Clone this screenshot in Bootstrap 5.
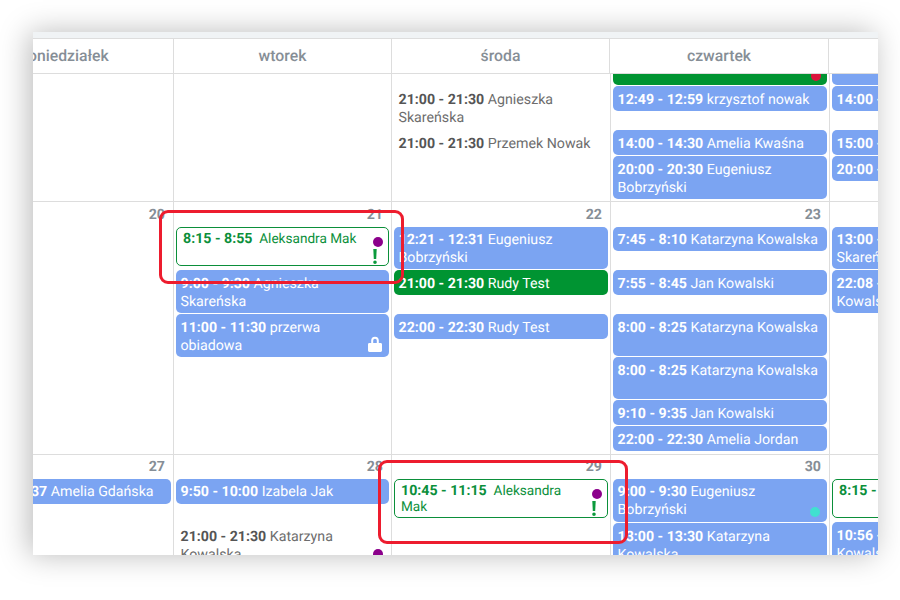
<!DOCTYPE html>
<html lang="pl">
<head>
<meta charset="utf-8">
<title>Kalendarz</title>
<link rel="stylesheet" href="https://cdn.jsdelivr.net/npm/bootstrap@5.3.0/dist/css/bootstrap.min.css">
<style>
html,body{height:100%;overflow:hidden;background:#fff}
body{font-family:Roboto,"Liberation Sans",sans-serif;font-size:14.2px;line-height:18px;color:#555;position:relative;text-rendering:geometricPrecision}
.frame{position:absolute;left:33px;top:32px;width:845px;height:523px;overflow:hidden;background:#fff;box-shadow:-4px 0 28px rgba(0,0,0,.27)}
.shell{margin-left:-78px;width:1100px}
.strip{height:6px;background:#f0f3f5;margin-left:78px}
.cal-head,.cal-row{display:grid;grid-template-columns:219px 218px 218px 219px 219px}
.cal-row{grid-template-columns:219px 218px 219px 219px 219px;border-top:1px solid #ddd}
.cal-head{border-top:1px solid #ddd;height:35px}
.hcell{border-right:1px solid #ddd;text-align:center;font-weight:500;font-size:15.75px;color:#868e96;line-height:34px}
.row-a{height:128px}
.row-b{height:253px}
.row-c{height:120px}
.dcell{border-right:1px solid #ddd;min-width:0}
.num{height:25px;padding:4px 8px 0 0;text-align:right;font-weight:700;color:#868e96;line-height:18px}
.row-c .num{height:24px;padding-top:3px}
.ev{margin:0 2px 1px;padding:5px 5px 2px 4.500px;border-radius:5px;background:#7ba4f2;color:#fff;position:relative;font-weight:400}
.num + .ev{padding-top:4px;padding-bottom:3px}
.ev b{font-weight:700}
.ev.plain{background:transparent;color:#6d6d6d}
.ev.plain b{color:#555}
.ev.full{background:#009432}
.ev.out,.num + .ev.out{background:#fff;color:#0b8f3a;border:1px solid #0b8f3a;padding:3px 28px 3px 6px;line-height:16px;height:39px;font-size:13.6px}
.ev.out b{font-size:14.2px}
.pad-icon{padding-right:30px}
.skip{margin-top:19px}
.lead-gap{margin-top:12px}
.top-cut{height:11px;padding:0;border-top-left-radius:0;border-top-right-radius:0;overflow:hidden}
.h24{height:24px}.h42{height:42px}.h43{height:43px}
.dot{position:absolute;width:10px;height:10px;border-radius:50%}
.dot-purple{background:#8b008b;right:5px;top:9px}
.dot-teal{background:#40e0d0;right:7px;top:28px}
.dot-red{background:#dc143c;right:6px;top:-3px}
.dot-low{background:#8b008b;right:6px;top:26px}
.bang{position:absolute;right:11px;top:21px;width:4px;height:15px}
.lock{position:absolute;right:7px;top:22px;width:14px;height:16px}
.mark-box{position:absolute;border:3.3px solid #ed1c2e;border-radius:9px;pointer-events:none}
.box-one{left:159px;top:210px;width:245px;height:74px}
.box-two{left:378px;top:460px;width:250px;height:84px}
</style>
</head>
<body>
<div class="frame">
  <div class="shell">
    <div class="strip"></div>
    <div class="cal-head">
      <div class="hcell">poniedziałek</div>
      <div class="hcell">wtorek</div>
      <div class="hcell">środa</div>
      <div class="hcell">czwartek</div>
      <div class="hcell">piątek</div>
    </div>

    <div class="cal-row row-a">
      <div class="dcell"></div>
      <div class="dcell"></div>
      <div class="dcell">
        <div class="ev plain lead-gap"><b>21:00 - 21:30</b> Agnieszka Skareńska</div>
        <div class="ev plain"><b>21:00 - 21:30</b> Przemek Nowak</div>
      </div>
      <div class="dcell">
        <div class="ev full top-cut"><span class="dot dot-red"></span></div>
        <div class="ev"><b>12:49 - 12:59</b> krzysztof nowak</div>
        <div class="ev skip"><b>14:00 - 14:30</b> Amelia Kwaśna</div>
        <div class="ev"><b>20:00 - 20:30</b> Eugeniusz Bobrzyński</div>
      </div>
      <div class="dcell">
        <div class="ev top-cut"></div>
        <div class="ev"><b>14:00 - 14:30</b> Jan Kowalski</div>
        <div class="ev skip"><b>15:00 - 15:30</b> Jan Kowalski</div>
        <div class="ev"><b>20:00 - 20:30</b> Rudy Test</div>
      </div>
    </div>

    <div class="cal-row row-b">
      <div class="dcell"><div class="num">20</div></div>
      <div class="dcell"><div class="num">21</div>
        <div class="ev out mb-1"><b>8:15 - 8:55</b>&nbsp; Aleksandra Mak<span class="dot dot-purple"></span>
          <svg class="bang" viewBox="0 0 4 15"><path d="M.3 0h3.400l-.5 10H.8z M2 11.400a1.800 1.800 0 1 1 0 3.600 1.800 1.800 0 0 1 0-3.600z" fill="#0b9a3c"/></svg></div>
        <div class="ev"><b>9:00 - 9:30</b> Agnieszka Skareńska</div>
        <div class="ev pad-icon"><b>11:00 - 11:30</b> przerwa obiadowa
          <svg class="lock" viewBox="0 0 14 16"><path d="M3.200 7V4.600a3.800 3.800 0 0 1 7.600 0V7h-2V4.600a1.800 1.800 0 0 0-3.600 0V7z M1.400 7h11.200c.8 0 1.400.6 1.400 1.400v6.200c0 .8-.6 1.400-1.400 1.400H1.400C.6 16 0 15.400 0 14.600V8.400C0 7.600.6 7 1.400 7z" fill="#fff"/></svg></div>
      </div>
      <div class="dcell"><div class="num">22</div>
        <div class="ev h42"><b>12:21 - 12:31</b> Eugeniusz Bobrzyński</div>
        <div class="ev full"><b>21:00 - 21:30</b> Rudy Test</div>
        <div class="ev skip"><b>22:00 - 22:30</b> Rudy Test</div>
      </div>
      <div class="dcell"><div class="num">23</div>
        <div class="ev h24"><b>7:45 - 8:10</b> Katarzyna Kowalska</div>
        <div class="ev skip"><b>7:55 - 8:45</b> Jan Kowalski</div>
        <div class="ev skip h42"><b>8:00 - 8:25</b> Katarzyna Kowalska</div>
        <div class="ev h42"><b>8:00 - 8:25</b> Katarzyna Kowalska</div>
        <div class="ev"><b>9:10 - 9:35</b> Jan Kowalski</div>
        <div class="ev"><b>22:00 - 22:30</b> Amelia Jordan</div>
      </div>
      <div class="dcell"><div class="num">24</div>
        <div class="ev h42"><b>13:00 - 13:30</b> Agnieszka Skareńska</div>
        <div class="ev h43"><b>22:08 - 22:30</b> Katarzyna Kowalska</div>
      </div>
    </div>

    <div class="cal-row row-c">
      <div class="dcell"><div class="num">27</div>
        <div class="ev"><b>10:27 - 10:37</b> Amelia Gdańska</div>
      </div>
      <div class="dcell"><div class="num">28</div>
        <div class="ev"><b>9:50 - 10:00</b> Izabela Jak</div>
        <div class="ev plain skip"><b>21:00 - 21:30</b> Katarzyna Kowalska<span class="dot dot-low"></span></div>
      </div>
      <div class="dcell"><div class="num">29</div>
        <div class="ev out"><b>10:45 - 11:15</b>&nbsp; Aleksandra Mak<span class="dot dot-purple"></span>
          <svg class="bang" viewBox="0 0 4 15"><path d="M.3 0h3.400l-.5 10H.8z M2 11.400a1.800 1.800 0 1 1 0 3.600 1.800 1.800 0 0 1 0-3.600z" fill="#0b9a3c"/></svg></div>
      </div>
      <div class="dcell"><div class="num">30</div>
        <div class="ev"><b>9:00 - 9:30</b> Eugeniusz Bobrzyński<span class="dot dot-teal"></span></div>
        <div class="ev"><b>13:00 - 13:30</b> Katarzyna Kowalska</div>
      </div>
      <div class="dcell"><div class="num">1</div>
        <div class="ev out mb-1"><b>8:15 - 8:55</b>&nbsp; Aleksandra Mak</div>
        <div class="ev"><b>10:56 - 11:06</b> Katarzyna Kowalska</div>
      </div>
    </div>
  </div>
</div>
<div class="mark-box box-one"></div>
<div class="mark-box box-two"></div>
<script src="https://cdn.jsdelivr.net/npm/bootstrap@5.3.0/dist/js/bootstrap.bundle.min.js"></script>
</body>
</html>
